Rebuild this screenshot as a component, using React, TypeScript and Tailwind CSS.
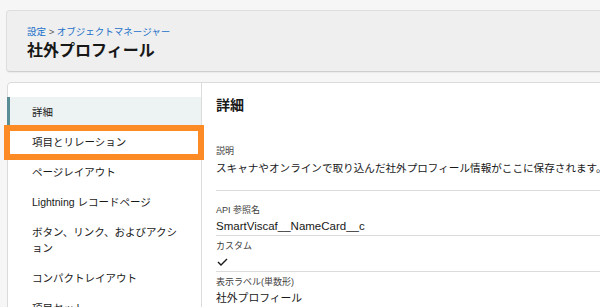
import { ReactNode } from "react";

const NAV = [
  "詳細",
  "項目とリレーション",
  "ページレイアウト",
  "Lightning レコードページ",
  "ボタン、リンク、およびアクション",
  "コンパクトレイアウト",
  "項目セット",
];

function Field({ label, children, first }: { label: string; children: ReactNode; first?: boolean }) {
  return (
    <div className={`border-t border-[#dddbda] ${first ? "pt-[12px]" : "pt-[3px]"}`}>
      <div className="text-[9px] leading-[14px] text-[#3e3e3c]">{label}</div>
      <div className="leading-[18px] text-[#181818]">{children}</div>
    </div>
  );
}

export default function App() {
  return (
    <div className="w-[600px] h-[307px] overflow-hidden bg-[#f6f6f6] font-['Liberation_Sans','Noto_Sans_CJK_JP',sans-serif] text-[#181818]">
      <div className="ml-[6px] mt-[10px] w-[640px] h-[62px] rounded-[4px] border border-[#dedede] border-b-[#cfcfcf] bg-[#efefef] pl-[20px] pt-[14px] shadow-[0_1px_1px_rgba(0,0,0,0.05)]">
        <div className="text-[9.5px] leading-[14px] text-[#1b6fc9]">
          設定 <span className="text-[#555]">&gt;</span> オブジェクトマネージャー
        </div>
        <h1 className="text-[16px] font-bold leading-[24px] text-[#181818]">社外プロフィール</h1>
      </div>

      <div className="ml-[7px] mt-[10px] flex w-[640px] h-[240px] rounded-tl-[4px] border border-[#dddbda] bg-white">
        <nav className="w-[194px] shrink-0 border-r border-[#dddbda] pt-[14px] text-[10.5px]">
          {NAV.map((item, i) => (
            <div
              key={item}
              className={`relative py-[7px] pl-[24px] pr-[20px] leading-[16px] ${i === 0 ? "bg-[#edf2f3]" : ""}`}
            >
              {i === 0 && <span className="absolute left-[-1px] top-0 bottom-0 w-[3px] bg-[#5a8e96]" />}
              {i === 1 && (
                <span className="absolute left-[-4px] right-[-3px] top-[-2px] bottom-[-3px] border-[6px] border-[#fd8b25]" />
              )}
              {item}
            </div>
          ))}
        </nav>

        <section className="flex-1 pl-[14px] pt-[12px] text-[10.5px]">
          <h2 className="text-[14px] font-bold leading-[20px]">詳細</h2>
          <div className="mt-[29px] pb-[11px]">
            <div className="text-[9px] leading-[14px] text-[#3e3e3c]">説明</div>
            <div className="text-[10.6px] leading-[21px] whitespace-nowrap">
              スキャナやオンラインで取り込んだ社外プロフィール情報がここに保存されます。
            </div>
          </div>
          <Field label="API 参照名" first>
            <span className="text-[11.5px]">SmartViscaf__NameCard__c</span>
          </Field>
          <Field label="カスタム">
            <svg width="11" height="18" viewBox="0 0 11 18" className="ml-[1px]">
              <polyline points="1,9 4,12 10,6" fill="none" stroke="#181818" strokeWidth="1.4" />
            </svg>
          </Field>
          <Field label="表示ラベル(単数形)">
            <span className="text-[10.8px]">社外プロフィール</span>
          </Field>
        </section>
      </div>
    </div>
  );
}
